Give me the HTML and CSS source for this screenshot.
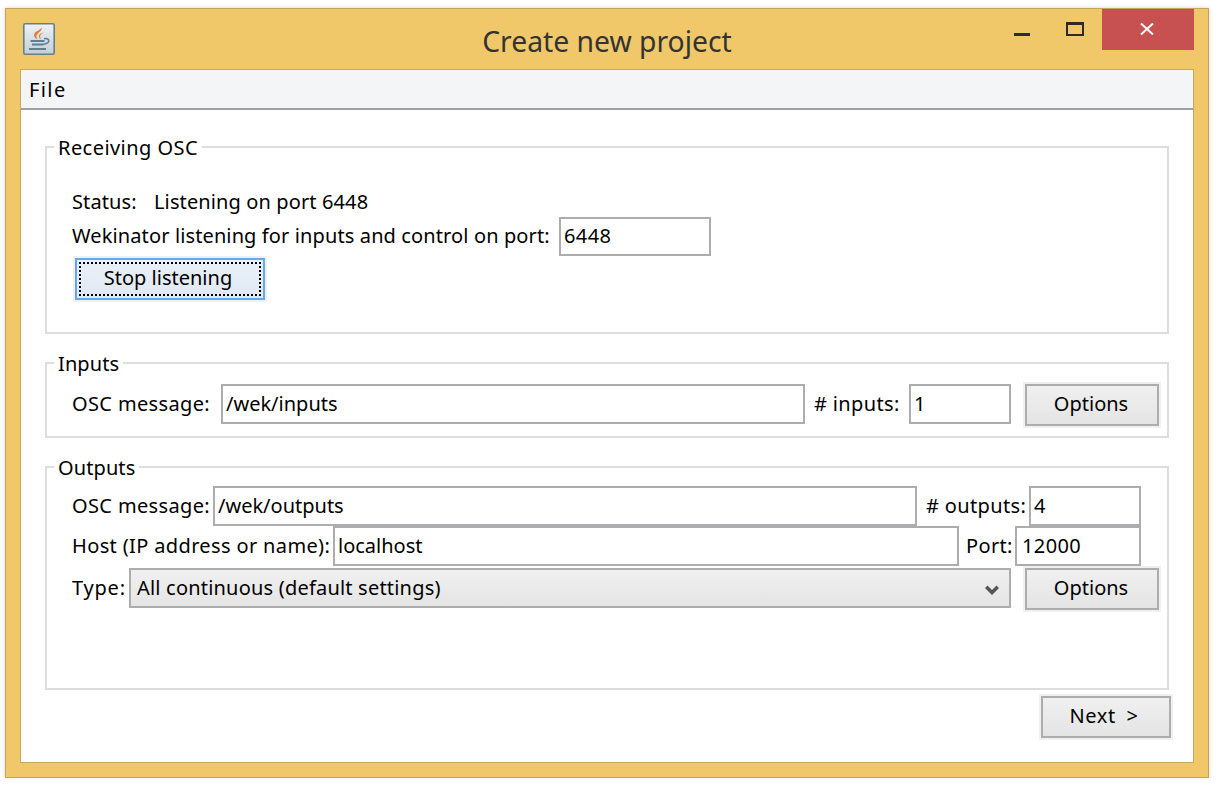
FILE: index.html
```html
<!DOCTYPE html>
<html lang="en">
<head>
<meta charset="utf-8">
<title>Create new project</title>
<link rel="stylesheet" href="styles.css">
</head>
<body>
<div class="window">
  <header class="titlebar">
    <svg class="app-icon" viewBox="0 0 32 32" width="32" height="32">
      <defs>
        <linearGradient id="ig" x1="0" y1="0" x2="0" y2="1"><stop offset="0" stop-color="#eef2f5"/><stop offset="1" stop-color="#c2ced6"/></linearGradient>
        <filter id="soft"><feGaussianBlur stdDeviation="0.4"/></filter>
      </defs>
      <g filter="url(#soft)">
        <rect x="0.800" y="0.800" width="30.400" height="30.400" rx="1.500" fill="url(#ig)" stroke="#64808f" stroke-width="1.600"/>
        <path d="M18.500 4.500c1.500 3.500-4.500 5-5 8.500-.2 1.500.4 2.500 1.300 3.500-3-1-4.500-3.500-3.300-6 1.200-2.600 5.800-3 7-6z" fill="#e57c35"/>
        <path d="M21.500 9.500c-2.800 1-4.800 2.300-4.300 4.800.1.700.5 1.300.9 1.900-2.500-1-3-3.700-.9-5.400 1.100-.8 2.800-1.200 4.300-1.300z" fill="#e57c35"/>
        <path d="M7.500 17h14v2h-14zM9 20.500h11v2H9zM6 25h17v2H6z" fill="#5c7f97"/>
        <path d="M21 15.800c3-.8 5.200.5 4.700 2.400-.4 1.800-3 2.900-5.700 3.200" fill="none" stroke="#5c7f97" stroke-width="1.600"/>
      </g>
    </svg>
    <h1 class="title">Create new project</h1>
    <div class="controls">
      <span class="ctl-min"></span>
      <span class="ctl-max"></span>
      <span class="ctl-close">
        <svg viewBox="0 0 14 12" width="14" height="12"><path d="M1 0.500L13 11.500M13 0.500L1 11.500" stroke="#fff" stroke-width="2" fill="none"/></svg>
      </span>
    </div>
  </header>
  <div class="client">
    <nav class="menubar"><span>File</span></nav>
    <main class="content">
      <fieldset class="panel panel-osc">
        <legend class="legend-wide">Receiving OSC</legend>
        <div class="status"><span class="status-key">Status:</span><span>Listening on port 6448</span></div>
        <div class="row-port">
          <label>Wekinator listening for inputs and control on port:</label>
          <input class="field num" type="text" value="6448">
        </div>
        <button class="btn btn-focus" type="button">Stop listening</button>
      </fieldset>

      <fieldset class="panel panel-in">
        <legend>Inputs</legend>
        <div class="row row-in">
          <label>OSC message:</label>
          <input class="field" type="text" value="/wek/inputs">
          <label class="pad"># inputs:</label>
          <input class="field" type="text" value="1">
          <button class="btn btn-opt" type="button">Options</button>
        </div>
      </fieldset>

      <fieldset class="panel panel-out">
        <legend>Outputs</legend>
        <div class="row row-out1">
          <label>OSC message:</label>
          <input class="field" type="text" value="/wek/outputs">
          <label class="pad"># outputs:</label>
          <input class="field" type="text" value="4">
        </div>
        <div class="row row-out2">
          <label>Host (IP address or name):</label>
          <input class="field" type="text" value="localhost">
          <label class="pad">Port:</label>
          <input class="field num wide-pad" type="text" value="12000">
        </div>
        <div class="row row-out3">
          <label class="label-type">Type:</label>
          <div class="combo">
            <span>All continuous (default settings)</span>
            <svg viewBox="0 0 14 12" width="14" height="12"><path d="M0 4L7 11L14 4L11.500 1.500L7 6L2.500 1.500z" fill="#555"/></svg>
          </div>
          <button class="btn btn-opt" type="button">Options</button>
        </div>
      </fieldset>

      <div class="footer"><button class="btn btn-next" type="button">Next &gt;</button></div>
    </main>
  </div>
</div>
</body>
</html>
```
FILE: styles.css
```css
* { box-sizing: border-box; }
html, body { margin: 0; background: #fff; }
body {
  padding: 8px 0 0 5px;
  font-family: "Noto Sans", "Open Sans", sans-serif;
  font-size: 20px;
  color: #000;
}
.window {
  width: 1204px;
  height: 770px;
  background: #f0c869;
  border: 1px solid #c3a55a;
  box-shadow: 0 0 4px rgba(0,0,0,.18);
  padding: 0 14px 14px;
  display: flex;
  flex-direction: column;
}
.titlebar {
  height: 60px;
  flex: none;
  display: flex;
  position: relative;
  justify-content: center;
}
.app-icon { position: absolute; left: 3px; top: 14px; }
.title {
  margin: 12px 0 0;
  font-size: 28.300px;
  font-weight: 400;
  line-height: 40px;
  color: #333;
}
.controls {
  position: absolute;
  right: 0;
  top: 0;
  display: flex;
  align-items: flex-start;
}
.ctl-min { width: 16px; height: 3px; background: #2b2b2b; margin: 24px 36px 0 0; }
.ctl-max { width: 18px; height: 14px; border: 2px solid #2b2b2b; border-top-width: 3px; margin: 13px 18px 0 0; }
.ctl-close {
  width: 92px;
  height: 41px;
  background: #c75050;
  display: flex;
  align-items: center;
  justify-content: center;
  padding: 0 2px 1px 0;
}
.client {
  flex: 1;
  border: 1px solid #c8a85a;
  background: #fff;
  display: flex;
  flex-direction: column;
}
.menubar {
  height: 40px;
  flex: none;
  background: #f4f5f7;
  border-bottom: 2px solid #a0a0a0;
  padding: 0 8px;
  line-height: 40px;
  letter-spacing: 1.400px;
}
.content { padding: 25px 22px 0 24px; }
.panel {
  margin: 0 2px 17px 0;
  padding: 0 8px 0 25px;
  border: 2px solid #ddd;
  min-width: 0;
}
.panel legend {
  margin-left: -18px;
  padding: 0 4px;
  line-height: 26px;
  height: 24px;
  letter-spacing: .1px;
}
.panel .legend-wide { letter-spacing: .45px; }
.panel-osc { height: 199px; padding-top: 31px; }
.panel-in { height: 87px; padding-top: 9px; }
.panel-out { height: 235px; margin-bottom: 0; padding-top: 7px; }
.status { line-height: 24px; letter-spacing: .12px; }
.status-key { display: inline-block; width: 82px; }
.row-port { display: flex; align-items: center; margin-top: 3px; height: 39px; }
.row-port label { width: 487px; letter-spacing: .12px; padding-bottom: 2px; }
.row-port .field { width: 152px; height: 39px; }
.row { display: grid; align-items: center; }
.row label { letter-spacing: .36px; white-space: nowrap; padding-bottom: 1px; }
.row .pad { padding-left: 9px; }
.row .label-type { letter-spacing: .8px; }
.row-in { grid-template-columns: 149px 584px 104px 102px 1fr; height: 42px; }
.row-in label { padding-bottom: 3px; }
.row-in .field { align-self: start; }
.row-out1 { grid-template-columns: 141px 704px 112px 112px; height: 40px; }
.row-out2 { grid-template-columns: 261px 626px 56px 126px; height: 40px; }
.row-out2 .pad { padding-left: 7px; }
.row-out3 { grid-template-columns: 57px 882px 1fr; margin-top: 2px; height: 42px; }
.row-out3 label { padding-bottom: 3px; }
.field {
  width: 100%;
  height: 40px;
  border: 2px solid #adadb0;
  background: #fff;
  padding: 0 3px 2px;
  font: inherit;
  color: #000;
  outline: none;
  border-radius: 0;
}
.num { letter-spacing: .4px; }
.wide-pad { padding-left: 5px; }
.combo {
  height: 40px;
  align-self: start;
  border: 2px solid #adadb0;
  background: linear-gradient(#f0f0f0, #e5e5e5);
  padding: 0 10px 2px 6px;
  display: flex;
  align-items: center;
  justify-content: space-between;
  letter-spacing: .2px;
}
.combo svg { margin-top: 6px; }
.btn {
  font: inherit;
  color: #000;
  height: 42px;
  padding: 0 2px 4px 0;
  background: linear-gradient(#f0f0f0, #e4e4e4);
  border: 2px solid #adadad;
  box-shadow: 0 0 0 2px #f0f0f0;
  border-radius: 0;
}
.btn-opt { width: 134px; justify-self: end; margin-right: 0; }
.btn-next { width: 130px; padding-right: 4px; letter-spacing: .6px; word-spacing: 5px; }
.btn-focus {
  position: relative;
  display: block;
  width: 190px;
  margin: 2px 0 0 3px;
  padding-right: 4px;
  background: linear-gradient(#e9f0f8, #e0e9f4);
  border-color: #64a8f0;
}
.btn-focus::after {
  content: "";
  position: absolute;
  inset: 2px;
  background:
    repeating-linear-gradient(90deg, #000 0 2px, transparent 2px 4px) top / 100% 2px no-repeat,
    repeating-linear-gradient(90deg, #000 0 2px, transparent 2px 4px) bottom / 100% 2px no-repeat,
    repeating-linear-gradient(0deg, #000 0 2px, transparent 2px 4px) left / 2px 100% no-repeat,
    repeating-linear-gradient(0deg, #000 0 2px, transparent 2px 4px) right / 2px 100% no-repeat;
}
.footer { display: flex; justify-content: flex-end; margin-top: 6px; }
```
